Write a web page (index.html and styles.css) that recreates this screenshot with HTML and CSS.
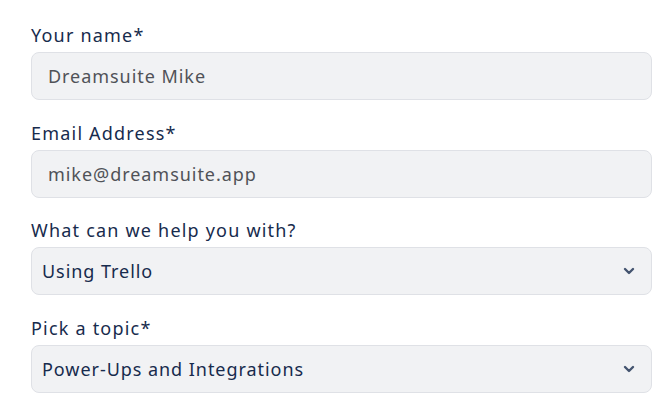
FILE: index.html
```html
<!DOCTYPE html>
<html>
<head>
<meta charset="utf-8">
<link rel="stylesheet" href="styles.css">
</head>
<body>
<form class="form">
  <div class="field">
    <label class="label">Your name*</label>
    <div class="input">Dreamsuite Mike</div>
  </div>
  <div class="field">
    <label class="label">Email Address*</label>
    <div class="input">mike@dreamsuite.app</div>
  </div>
  <div class="field">
    <label class="label">What can we help you with?</label>
    <div class="select"><span>Using Trello</span>
      <svg class="chev" width="12" height="8" viewBox="0 0 12 8"><path d="M2 2l4 4 4-4" fill="none" stroke="#44546F" stroke-width="2.4" stroke-linecap="round" stroke-linejoin="round"/></svg>
    </div>
  </div>
  <div class="field">
    <label class="label">Pick a topic*</label>
    <div class="select"><span>Power-Ups and Integrations</span>
      <svg class="chev" width="12" height="8" viewBox="0 0 12 8"><path d="M2 2l4 4 4-4" fill="none" stroke="#44546F" stroke-width="2.4" stroke-linecap="round" stroke-linejoin="round"/></svg>
    </div>
  </div>
</form>
</body>
</html>
```
FILE: styles.css
```css
html, body { margin: 0; padding: 0; background: #fff; }
body { font-family: "Noto Sans", sans-serif; }
.form {
  display: flex;
  flex-direction: column;
  gap: 21.7px;
  padding: 24px 18px 0 31px;
}
.field { display: flex; flex-direction: column; gap: 6px; }
.label {
  color: #172B4D;
  font-size: 18px;
  line-height: 22px;
  letter-spacing: 1.2px;
}
.input, .select {
  box-sizing: border-box;
  height: 48px;
  background: #F1F2F4;
  border: 1.5px solid #DFE1E6;
  border-radius: 8px;
  display: flex;
  align-items: center;
  font-size: 18px;
  letter-spacing: 0.95px;
}
.input { padding-left: 16px; color: #505258; }
.select { padding: 0 16px 0 10px; color: #172B4D; justify-content: space-between; }
.chev { display: block; }
```
